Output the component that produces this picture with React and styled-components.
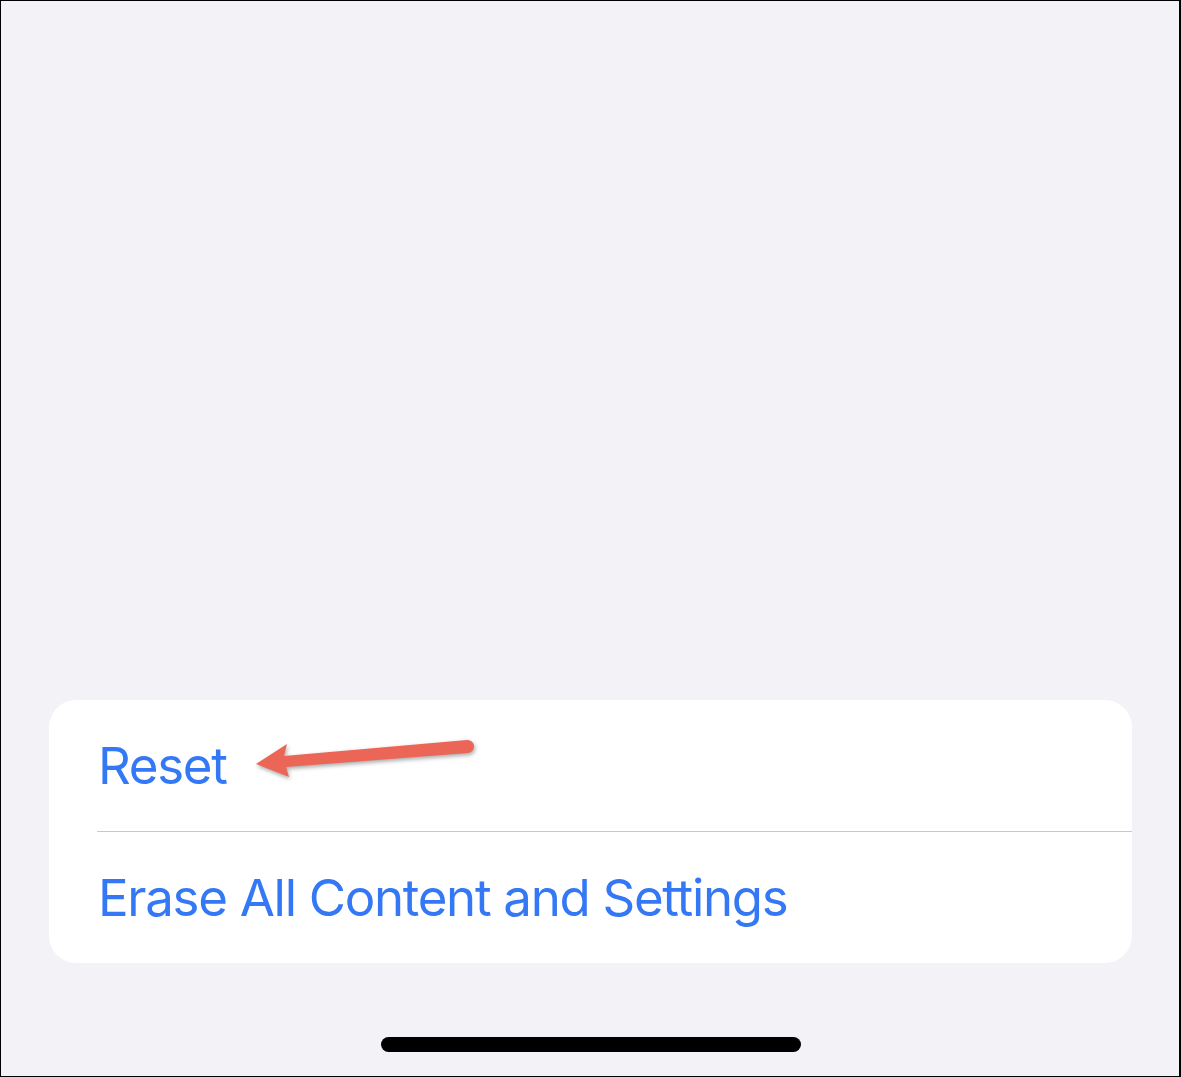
import React from "react";
import styled, { createGlobalStyle } from "styled-components";

const Global = createGlobalStyle`
  html, body { margin: 0; padding: 0; background: #f2f2f7; }
  * { box-sizing: border-box; }
`;

const Frame = styled.div`
  position: relative;
  width: 1181px;
  height: 1077px;
  background: #f2f2f7;
  border: 1px solid #000;
  border-right-width: 2px;
  display: flex;
  flex-direction: column;
  justify-content: flex-end;
  align-items: center;
  padding: 0 47px 24px 48px;
  font-family: Inter, "Noto Sans", sans-serif;
`;

const Card = styled.div`
  position: relative;
  width: 100%;
  background: #ffffff;
  border-radius: 27px;
  display: flex;
  flex-direction: column;
  margin-bottom: 74px;
`;

const Row = styled.div`
  height: 131px;
  display: flex;
  align-items: center;
  padding-left: 49px;
  color: #3478f6;
  font-size: 51px;
  letter-spacing: -1.3px;
  line-height: 1;
`;

const Separator = styled.div`
  height: 1px;
  margin-left: 48px;
  background: #c8c7cc;
`;

const HomeIndicator = styled.div`
  width: 420px;
  height: 15px;
  border-radius: 8px;
  background: #000;
`;

const ArrowSvg = styled.svg`
  position: absolute;
  left: 200px;
  top: 30px;
  overflow: visible;
  filter: drop-shadow(1px 2px 2px rgba(0, 0, 0, 0.35));
`;

export default function App() {
  return (
    <>
      <Global />
      <Frame>
        <Card>
          <Row>Reset</Row>
          <Separator />
          <Row>Erase All Content and Settings</Row>
          <ArrowSvg width="280" height="60" viewBox="200 30 280 60">
            <path
              d="M256 764 L287 744 L284 756 L467 740 A6.5 6.5 0 0 1 468 753 L286 767 L289 777 Z"
              fill="#eb6657"
              transform="translate(-49 -700)"
            />
          </ArrowSvg>
        </Card>
        <HomeIndicator />
      </Frame>
    </>
  );
}
